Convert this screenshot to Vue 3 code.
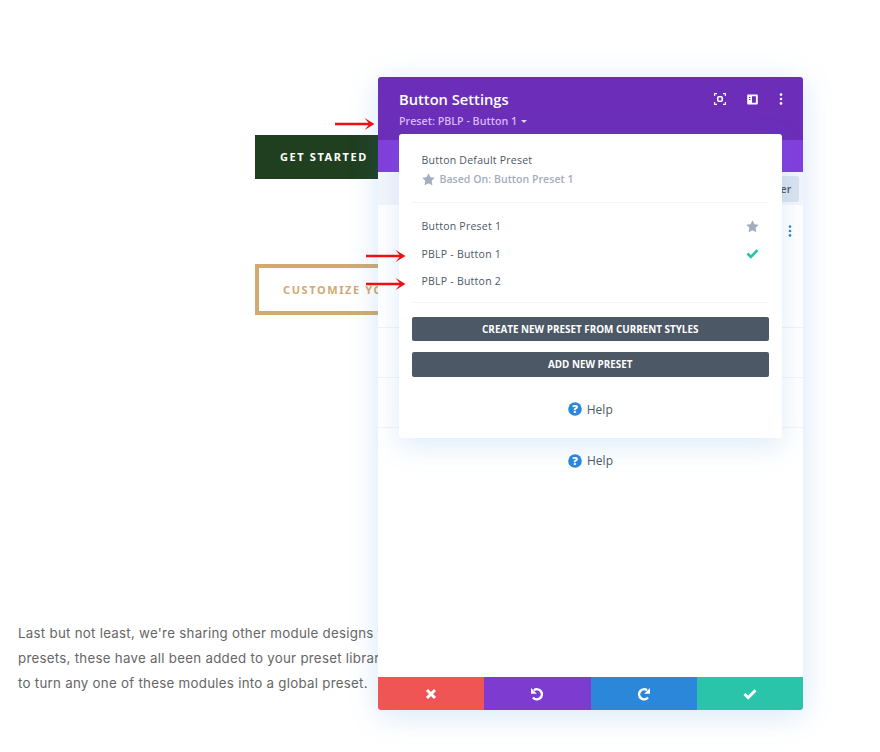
<script setup>
const lines = [
  "Last but not least, we're sharing other module designs that use the same",
  "presets, these have all been added to your preset library, and you're free",
  "to turn any one of these modules into a global preset."
]
const arrows = [
  { cls: 'a1' }, { cls: 'a2' }, { cls: 'a3' }
]
const star = 'M6 .3l1.8 3.6 4 .55-2.9 2.8.7 4L6 9.350l-3.600 1.900.7-4L.2 4.450l4-.55z'
</script>

<template>
  <div class="page">
    <main class="content">
      <a class="btn-dark">GET STARTED</a>
      <a class="btn-outline">CUSTOMIZE YOUR DESIGN</a>
      <p class="copy"><span v-for="l in lines" :key="l" class="line">{{ l }}</span></p>
    </main>

    <section class="panel">
      <header class="head">
        <div class="head-top">
          <h1>Button Settings</h1>
          <div class="head-icons">
            <svg width="12" height="12" viewBox="0 0 12 12" fill="none" stroke="#fff" stroke-width="1.1">
              <path d="M.6 3V.6H3M9 .6h2.400V3M11.400 9v2.400H9M3 11.400H.6V9"/>
              <rect x="3.800" y="3.800" width="4.400" height="4.400" rx="1" stroke-width="1.600"/>
            </svg>
            <svg width="11" height="11" viewBox="0 0 11 11">
              <path fill="#fff" fill-rule="evenodd" d="M1 .5h9a.8.8 0 0 1 .8.8v8.400a.8.8 0 0 1-.8.8H1a.8.8 0 0 1-.8-.8V1.300A.8.8 0 0 1 1 .5zM5 2.200v6.600h3.900V2.200zM2 3v1h1.500V3zm0 2v1h1.500V5z"/>
            </svg>
            <svg width="4" height="12" viewBox="0 0 4 12" fill="#fff">
              <circle cx="2" cy="1.600" r="1.300"/><circle cx="2" cy="6" r="1.300"/><circle cx="2" cy="10.400" r="1.300"/>
            </svg>
          </div>
        </div>
        <div class="preset-line">Preset: PBLP - Button 1 <i class="caret"></i></div>
      </header>
      <div class="tabs"></div>
      <div class="toolbar"><span class="filter">Filter</span></div>
      <div class="body">
        <div class="row row-first">
          <svg class="more" width="4" height="12" viewBox="0 0 4 12" fill="#2b87da">
            <circle cx="2" cy="1.600" r="1.300"/><circle cx="2" cy="6" r="1.300"/><circle cx="2" cy="10.400" r="1.300"/>
          </svg>
        </div>
        <div class="row row-mid"></div>
        <div class="row row-mid"></div>
        <div class="help help-main">
          <svg width="14" height="14" viewBox="0 0 14 14"><circle cx="7" cy="7" r="6.800" fill="#2b87da"/><text x="7" y="10.800" text-anchor="middle" class="q">?</text></svg>
          <span>Help</span>
        </div>
      </div>
      <footer class="foot">
        <button class="f red">
          <svg width="12" height="12" viewBox="0 0 12 12"><path fill="none" stroke="#fff" stroke-width="3" d="M2 2l8 8M10 2l-8 8"/></svg>
        </button>
        <button class="f purple">
          <svg width="14" height="14" viewBox="0 0 14 14"><path fill="none" stroke="#fff" stroke-width="2.500" d="M4 3.200A5 5 0 1 1 3 10.500"/><path fill="#fff" d="M1 1v5.800h5.800z"/></svg>
        </button>
        <button class="f blue">
          <svg width="14" height="14" viewBox="0 0 14 14"><path fill="none" stroke="#fff" stroke-width="2.500" d="M10 3.200A5 5 0 1 0 11 10.500"/><path fill="#fff" d="M13 1v5.800H7.200z"/></svg>
        </button>
        <button class="f green">
          <svg width="14" height="12" viewBox="0 0 14 12"><path fill="none" stroke="#fff" stroke-width="3" d="M1.500 6l3.700 3.700L12.500 2.300"/></svg>
        </button>
      </footer>

      <div class="menu">
        <div class="m-top">
          <div class="m-name">Button Default Preset</div>
          <div class="m-based">
            <svg width="13" height="13" viewBox="0 0 12 12"><path :d="star" fill="#a3adbd"/></svg>
            <span>Based On: Button Preset 1</span>
          </div>
        </div>
        <ul class="m-list">
          <li><span>Button Preset 1</span><svg width="13" height="13" viewBox="0 0 12 12"><path :d="star" fill="#a3adbd"/></svg></li>
          <li><span>PBLP - Button 1</span><svg width="13" height="11" viewBox="0 0 14 12"><path fill="none" stroke="#29c4a9" stroke-width="3" d="M1.500 6l3.700 3.700L12.500 2.300"/></svg></li>
          <li><span>PBLP - Button 2</span></li>
        </ul>
        <div class="m-actions">
          <button class="m-btn">CREATE NEW PRESET FROM CURRENT STYLES</button>
          <button class="m-btn">ADD NEW PRESET</button>
        </div>
        <div class="help">
          <svg width="14" height="14" viewBox="0 0 14 14"><circle cx="7" cy="7" r="6.800" fill="#2b87da"/><text x="7" y="10.800" text-anchor="middle" class="q">?</text></svg>
          <span>Help</span>
        </div>
      </div>
    </section>

    <svg v-for="a in arrows" :key="a.cls" class="arrow" :class="a.cls" width="40" height="14" viewBox="0 0 40 14">
      <path fill="#ee0f12" d="M0 5.700h33.500L29.500 1 39.500 7 29.500 13l4-4.700H0z"/>
    </svg>
  </div>
</template>

<style>
html, body { margin: 0; background: #fff; }
</style>

<style scoped>
.page { position: relative; width: 880px; height: 752px; overflow: hidden; background: #fff; font-family: "Open Sans", "Noto Sans", sans-serif; }
.content { display: flex; flex-direction: column; align-items: flex-start; padding: 135px 0 0 18px; }
.btn-dark, .btn-outline { display: flex; align-items: center; box-sizing: border-box; margin-left: 237px; font-family: "Noto Sans", sans-serif; font-weight: 700; font-size: 11px; letter-spacing: 1.600px; white-space: nowrap; }
.btn-dark { width: 180px; height: 44px; padding: 0 0 2px 25px; background: #1f3f1e; color: #fff; }
.btn-outline { width: 300px; height: 51px; margin-top: 85px; padding-left: 24px; border: 4px solid #d2aa70; color: #d0aa72; }
.copy { margin: 306px 0 0; font-family: "Inter", sans-serif; font-size: 13.300px; line-height: 25px; color: #666; letter-spacing: .275px; }
.line { display: block; white-space: nowrap; }

.panel { position: absolute; left: 378px; top: 77px; width: 425px; height: 633px; display: flex; flex-direction: column; border-radius: 3px; box-shadow: 0 5px 30px rgba(43,135,218,.2); background: #fff; }
.head { height: 63px; box-sizing: border-box; padding: 13px 20px 0 21px; background: #6c2eb9; border-radius: 3px 3px 0 0; color: #fff; }
.head-top { display: flex; justify-content: space-between; align-items: center; margin-top: -1px; }
h1 { margin: 0; font-size: 14.700px; line-height: 20px; font-weight: 600; color: #fff; }
.head-icons { display: flex; align-items: center; gap: 21px; }
.preset-line { margin-top: 5px; font-size: 10.700px; line-height: 14px; font-weight: 600; color: #d9b9f4; display: flex; align-items: center; gap: 4px; }
.caret { width: 0; height: 0; margin-top: 1px; border: 3px solid transparent; border-top: 3.500px solid #e6d2f8; border-bottom: 0; }
.tabs { height: 32px; background: #833edb; }
.toolbar { height: 33px; box-sizing: border-box; display: flex; justify-content: flex-end; padding: 4px 4px 3px; background: #f3f6fb; }
.filter { display: flex; align-items: center; width: 100px; box-sizing: border-box; padding-left: 66px; border-radius: 3px; background: #dbe3ee; color: #4c5866; font-size: 10.500px; font-weight: 600; }
.body { flex: 1; display: flex; flex-direction: column; background: #fff; }
.row { box-sizing: border-box; border-bottom: 1px solid #f1f4f8; }
.row-first { position: relative; height: 123px; padding: 20px 0 0 410px; }
.more { display: block; }
.row-mid { height: 50px; }
.help { display: flex; align-items: center; justify-content: center; gap: 5px; font-size: 12px; font-weight: 500; color: #4c5866; }
.help-main { margin-top: 24px; }
.q { font-family: "Open Sans", sans-serif; font-size: 11px; font-weight: 800; fill: #fff; }
.foot { display: flex; height: 33px; }
.f { flex: 1; display: flex; align-items: center; justify-content: center; padding: 0; border: 0; }
.red { background: #ef5555; border-radius: 0 0 0 3px; }
.purple { background: #7d3bcf; }
.blue { background: #2b87da; }
.green { background: #29c4a9; border-radius: 0 0 3px 0; }

.menu { position: absolute; left: 21px; top: 57px; width: 383px; height: 304px; box-sizing: border-box; padding: 0 13px 0 12.500px; background: #fff; border-radius: 3px; box-shadow: 0 8px 28px rgba(43,135,218,.16); color: #4c5866; font-size: 10.500px; font-weight: 500; letter-spacing: .24px; }
.m-top { height: 69px; box-sizing: border-box; padding: 18px 10px 0; border-bottom: 1px solid #f1f4f8; }
.m-name { line-height: 16px; }
.m-based { display: flex; align-items: center; gap: 5px; margin-top: 3px; line-height: 16px; color: #a3adbd; font-weight: 600; letter-spacing: .05px; }
.m-list { height: 100px; box-sizing: border-box; margin: 0; padding: 9.500px 10.500px 0 10px; list-style: none; border-bottom: 1px solid #f1f4f8; }
.m-list li { display: flex; justify-content: space-between; align-items: center; height: 27.500px; line-height: 16px; }
.m-actions { display: flex; flex-direction: column; gap: 11px; padding-top: 13.500px; }
.m-btn { height: 24.500px; padding: 0; border: 0; border-radius: 2px; background: #4c5866; color: #fff; font-family: inherit; font-size: 9.900px; font-weight: 700; }
.menu .help { margin-top: 24px; letter-spacing: 0; }

.arrow { position: absolute; }
.a1 { left: 335px; top: 117px; }
.a2 { left: 366px; top: 249px; }
.a3 { left: 366px; top: 277px; }
</style>
